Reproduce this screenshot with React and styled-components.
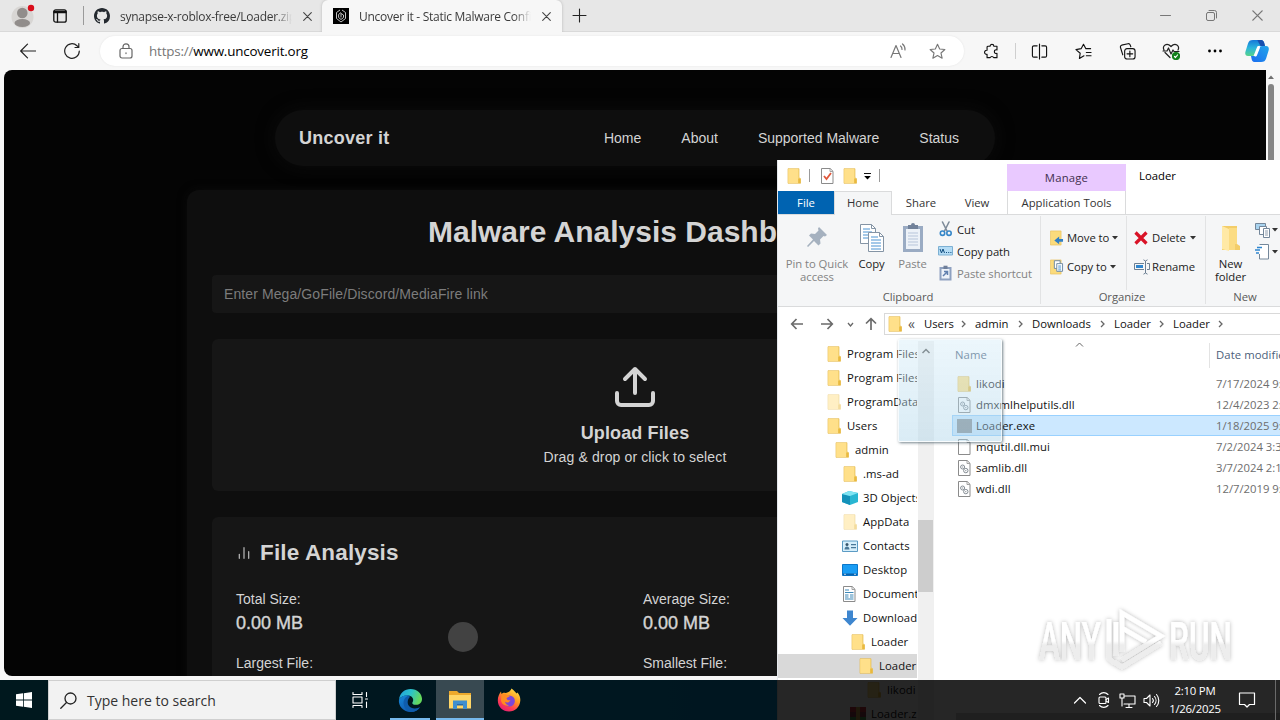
import React from 'react';

import styled, { createGlobalStyle } from 'styled-components';

const GlobalStyle = createGlobalStyle`
  * { box-sizing: border-box; }
  body {
    margin: 0;
    overflow: hidden;
    font-family: 'Open Sans', 'Noto Sans', sans-serif;
    font-size: 12px;
  }
  svg { display: block; flex: none; }
`;

const Desktop = styled.div`
  position: relative;
  width: 1280px;
  height: 720px;
  overflow: hidden;
  background: linear-gradient(90deg, #00a0c8, #0098d8 50%, #0080c0);
`;

/* ---------- browser ---------- */

const Browser = styled.div`
  position: absolute;
  top: 0;
  left: 0;
  width: 1280px;
  height: 680px;
  display: flex;
  flex-direction: column;
  background: #f7f7f7;
`;
const TabStrip = styled.div`
  display: flex;
  height: 32px;
  background: #e7e7e7;
  border-bottom: 1px solid #d9d9d9;
`;
const Profile = styled.div`
  display: flex;
  align-items: center;
  width: 84px;
  gap: 18px;
  padding-left: 11px;
  border-right: 1px solid #9a9a9a;
  margin: 6px 0;
`;
const Tab = styled.div`
  display: flex;
  align-items: center;
  width: ${p => p.width}px;
  height: 32px;
  padding-left: ${p => p.pad}px;
  background: ${p => (p.active ? '#f7f7f7' : 'transparent')};
  border-radius: 6px 6px 0 0;
  box-shadow: ${p => (p.active ? '0 0 3px #b5b5b5' : 'none')};
  clip-path: inset(0 -4px 0 -4px);
  color: #3b3b3b;
`;
const TabTitle = styled.div`
  flex: none;
  width: 172px;
  margin: 0 11px 0 10px;
  overflow: hidden;
  white-space: nowrap;
  font-size: 12px;
  letter-spacing: -0.27px;
  mask-image: linear-gradient(90deg, #000 90%, transparent);
`;
const NewTab = styled.div`
  display: flex;
  align-items: center;
  padding-left: 10px;
  flex: 1;
`;
const Caption = styled.div`
  display: flex;
  align-items: center;
  gap: 35px;
  padding-right: 17px;
`;
const Toolbar = styled.div`
  display: flex;
  align-items: center;
  height: 38px;
  padding: 0 2px 0 20px;
`;
const NavButtons = styled.div`
  display: flex;
  flex: none;
  gap: 28px;
  width: 80px;
`;
const Omnibox = styled.div`
  display: flex;
  align-items: center;
  flex: none;
  width: 864px;
  height: 30px;
  padding: 0 18px;
  border-radius: 15px;
  background: #fff;
  box-shadow: 0 0 2px #e2e2e2;
`;
const Url = styled.div`
  flex: 1;
  padding-left: 15px;
  font-size: 13.4px;
  letter-spacing: -0.18px;
  color: #000;
  span { color: #767676; }
`;
const OmniActions = styled.div`
  display: flex;
  gap: 22px;
`;
const ToolIcons = styled.div`
  display: flex;
  align-items: center;
  flex: 1;
  padding-left: 19px;
`;
const ToolSlot = styled.div`
  display: flex;
  flex: none;
  justify-content: center;
  width: ${p => p.width || 44}px;
`;
const ToolDivider = styled.div`
  flex: none;
  width: 1px;
  height: 16px;
  background: #cfcfcf;
  margin: 0 1px 0 15px;
`;
const Viewport = styled.div`
  display: flex;
  flex: 1;
  padding: 0 0 4px 4px;
`;
const Page = styled.div`
  width: 1262px;
  height: 606px;
  overflow: hidden;
  border-radius: 8px 0 0 8px;
  background: #040404;
  color: #d4d4d4;
  font-family: 'Liberation Sans', Arial, sans-serif;
  display: flex;
  flex-direction: column;
  align-items: center;
  padding-top: 40px;
`;
const PageScroll = styled.div`
  display: flex;
  flex-direction: column;
  align-items: center;
  width: 14px;
  padding: 5px 4px 0 0;
  gap: 5px;
  div { width: 6px; height: 400px; border-radius: 3px; background: #858585; }
`;
const SiteNav = styled.div`
  display: flex;
  align-items: center;
  justify-content: space-between;
  flex: none;
  width: 720px;
  height: 56px;
  padding: 0 36px 0 24px;
  border-radius: 28px;
  background: #0e0e0e;
  box-shadow: 0 0 18px #0c0c0c;
`;
const Brand = styled.div`
  font-size: 18px;
  font-weight: bold;
  letter-spacing: 0.25px;
`;
const Links = styled.div`
  display: flex;
  gap: 40px;
  font-size: 14px;
`;
const Dashboard = styled.div`
  flex: none;
  width: 896px;
  height: 700px;
  margin-top: 24px;
  padding: 24px 25px;
  border-radius: 12px;
  background: #0e0e0e;
  box-shadow: 0 0 10px #0b0b0b;
`;
const Heading = styled.h1`
  margin: 0 0 25px;
  font-size: 30px;
  line-height: 36px;
  text-align: center;
`;
const LinkInput = styled.div`
  height: 38px;
  padding: 0 12px;
  border-radius: 4px;
  background: #161616;
  color: #7c7c7c;
  font-size: 14px;
  line-height: 38px;
  letter-spacing: 0.1px;
`;
const DropZone = styled.div`
  display: flex;
  flex-direction: column;
  align-items: center;
  height: 152px;
  margin: 26px 0;
  padding-top: 24px;
  border-radius: 6px;
  background: #161616;
  font-size: 14px;
  letter-spacing: 0.13px;
  b { font-size: 18px; line-height: 24px; margin-top: 10px; }
  span { line-height: 24px; }
`;
const Analysis = styled.div`
  height: 300px;
  padding: 20px 24px;
  border-radius: 6px;
  background: #161616;
  h2 {
    display: flex;
    align-items: center;
    gap: 8px;
    margin: 0 0 18px;
    font-size: 22.5px;
    line-height: 32px;
    letter-spacing: 0.15px;
  }
`;
const Stats = styled.div`
  display: grid;
  grid-template-columns: 1fr 1fr;
  gap: 16px;
`;
const Stat = styled.div`
  font-size: 14px;
  line-height: 24px;
  b { display: block; font-size: 18px; font-weight: normal; -webkit-text-stroke: 0.4px #d4d4d4; }
`;
const ClickMark = styled.div`
  position: absolute;
  left: 448px;
  top: 622px;
  width: 30px;
  height: 30px;
  border-radius: 50%;
  background: #424242;
`;

/* ---------- file explorer ---------- */

const Explorer = styled.div`
  position: absolute;
  left: 777px;
  top: 160px;
  width: 620px;
  height: 600px;
  display: flex;
  flex-direction: column;
  background: #fff;
  border-left: 1px solid #e4e8ec;
  font-size: 11.3px;
  color: #1a1a1a;
  white-space: nowrap;
`;
const TitleBar = styled.div`
  display: flex;
  height: 31px;
`;
const QuickTools = styled.div`
  display: flex;
  align-items: center;
  width: 229px;
  padding-left: 9px;
`;
const QuickSlot = styled.div`
  width: ${p => p.width}px;
`;
const Bar = styled.div`
  width: 1px;
  height: 13px;
  background: #9a9a9a;
`;
const ManageTab = styled.div`
  width: 119px;
  height: 27px;
  margin-top: 4px;
  background: #e9c9ff;
  line-height: 28px;
  text-align: center;
  color: #41304f;
  letter-spacing: 0.2px;
`;
const WindowTitle = styled.div`
  padding-left: 13px;
  line-height: 31px;
  color: #000;
`;
const RibbonTabs = styled.div`
  display: flex;
  height: 23px;
`;
const RibbonTab = styled.div`
  width: ${p => p.width}px;
  height: ${p => (p.open ? 24 : 23)}px;
  text-align: center;
  line-height: ${p => (p.open ? 22 : 24)}px;
  color: ${p => (p.file ? '#fff' : '#333')};
  background: ${p => (p.file ? '#0063b1' : p.open ? '#f5f6f7' : 'transparent')};
  border: solid #dadbdc;
  border-width: ${p => (p.open ? '1px 1px 0' : p.tools ? '0 1px' : '0')};
  margin-right: ${p => p.space || 0}px;
  z-index: ${p => (p.open ? 1 : 0)};
`;
const Ribbon = styled.div`
  display: flex;
  flex: none;
  height: 93px;
  background: #f5f6f7;
  border: solid #dadbdc;
  border-width: 1px 0;
  letter-spacing: -0.07px;
`;
const Group = styled.div`
  display: flex;
  flex-direction: column;
  width: ${p => p.width}px;
  height: 88px;
  margin-top: 1px;
  border-right: 1px solid #e2e3e4;
`;
const GroupBody = styled.div`
  display: flex;
  height: 74px;
`;
const GroupName = styled.div`
  text-align: center;
  line-height: 14px;
  color: #5a5a5a;
  padding-right: 2px;
`;
const BigButton = styled.div`
  display: flex;
  flex-direction: column;
  align-items: center;
  width: ${p => p.width}px;
  padding-top: 6px;
  line-height: 13px;
  text-align: center;
  white-space: pre;
  color: ${p => (p.off ? '#838383' : '#222')};
  svg { margin-bottom: 3px; }
`;
const SmallButtons = styled.div`
  display: flex;
  flex-direction: column;
  padding: ${p => p.pad};
  width: ${p => p.width}px;
  border-left: ${p => (p.line ? '1px solid #e2e3e4' : '0')};
`;
const SmallButton = styled.div`
  display: flex;
  align-items: center;
  gap: ${p => (p.gap === undefined ? 4 : p.gap)}px;
  height: ${p => p.height}px;
  color: ${p => (p.off ? '#838383' : '#222')};
`;
const AddressRow = styled.div`
  display: flex;
  align-items: center;
  flex: none;
  height: 34px;
  padding-left: 12px;
`;
const HistoryButtons = styled.div`
  display: flex;
  align-items: center;
  flex: none;
  width: 94px;
  svg:nth-child(2) { margin: 0 13px 0 16px; }
  svg:nth-child(4) { margin-left: 10px; }
`;
const AddressBox = styled.div`
  display: flex;
  align-items: center;
  flex: 1;
  height: 22px;
  border: 1px solid #d9d9d9;
  padding: 0 0 1px 3px;
  color: #111;
`;
const Crumb = styled.div`
  display: flex;
  align-items: center;
  width: ${p => p.width}px;
  padding-right: 9px;
  span { flex: 1; }
`;
const Guillemet = styled.div`
  width: 21px;
  padding-left: 5px;
  font-size: 14px;
  line-height: 12px;
  color: #555;
`;
const Panes = styled.div`
  display: flex;
  flex: 1;
`;
const Tree = styled.div`
  width: 139px;
  padding-top: 1px;
  overflow: hidden;
  color: #111;
  letter-spacing: 0.08px;
`;
const TreeRow = styled.div`
  display: flex;
  align-items: center;
  height: 24px;
  padding-bottom: 2px;
  padding-left: ${p => 48 + p.level * 8}px;
  background: ${p => (p.selected ? '#d9d9d9' : 'transparent')};
`;
const TreeIcon = styled.div`
  display: flex;
  flex: none;
  width: 17px;
  margin: 2px 4px 0 0;
  padding-left: ${p => (p.wide ? 0 : 1)}px;
`;
const TreeScroll = styled.div`
  width: 16px;
  margin-left: 1px;
  background: #f0f0f0;
  padding-top: 5px;
`;
const TreeThumb = styled.div`
  width: 15px;
  height: 72px;
  margin-top: 164px;
  background: #cdcdcd;
`;
const FileList = styled.div`
  flex: 1;
  padding-left: 18px;
  letter-spacing: 0.08px;
`;
const ListHead = styled.div`
  display: flex;
  height: 32px;
  padding-top: 2px;
  line-height: 23px;
  color: #4c607a;
`;
const NameHead = styled.div`
  display: flex;
  width: 258px;
  height: 25px;
  align-items: center;
  padding: 0 0 2px 3px;
  border-right: 1px solid #e3e3e3;
  svg { margin: -20px 0 0 88px; }
`;
const DateHead = styled.div`
  padding-left: 6px;
`;
const FileRow = styled.div`
  display: flex;
  align-items: center;
  height: 21px;
  padding-left: 5px;
  background: ${p => (p.selected ? '#cce8ff' : 'transparent')};
  box-shadow: ${p => (p.selected ? 'inset 0 0 0 1px #99d1ff' : 'none')};
  color: #111;
`;
const FileName = styled.div`
  width: 240px;
  margin-left: 4px;
`;
const FileDate = styled.div`
  color: #6d6d6d;
  letter-spacing: -0.02px;
`;
const HScroll = styled.div`
  height: 17px;
  margin: 214px 0 0 4px;
  background: #cdcdcd;
`;
const DragGhost = styled.div`
  position: absolute;
  left: 898px;
  top: 339px;
  width: 104px;
  height: 103px;
  border: 1px solid rgba(255, 255, 255, 0.7);
  border-radius: 2px;
  background: linear-gradient(rgba(208, 234, 247, 0.4), rgba(172, 212, 233, 0.45));
  box-shadow: 1px 1px 3px rgba(70, 90, 100, 0.75);
`;
const Watermark = styled.div`
  position: absolute;
  left: 1030px;
  top: 602px;
`;

/* ---------- taskbar ---------- */

const Taskbar = styled.div`
  position: absolute;
  left: 0;
  top: 680px;
  width: 1280px;
  height: 40px;
  display: flex;
  align-items: center;
  background: rgba(0, 0, 0, 0.85);
  color: #fff;
`;
const TaskSlot = styled.div`
  display: flex;
  align-items: center;
  justify-content: center;
  width: ${p => p.width || 49}px;
  height: 40px;
  margin: 0 ${p => p.gap || 0}px;
  background: ${p => (p.active ? 'rgba(255, 255, 255, 0.22)' : 'transparent')};
  box-shadow: ${p => (p.running ? 'inset 0 -2px #76b9ed' : 'none')};
`;
const Search = styled.div`
  display: flex;
  align-items: center;
  width: 288px;
  height: 40px;
  padding-left: 11px;
  gap: 10px;
  background: #f2f2f2;
  border: 1px solid #cfcfcf;
  color: #333;
  font-size: 14px;
`;
const Tray = styled.div`
  display: flex;
  align-items: center;
  margin-left: auto;
  gap: 7px;
`;
const Clock = styled.div`
  width: 54px;
  margin: 0 3px 0 1px;
  font-size: 11.4px;
  line-height: 18px;
  text-align: center;
  letter-spacing: -0.25px;
  white-space: nowrap;
`;
const ShowDesktop = styled.div`
  width: 5px;
  height: 40px;
  margin-left: 6px;
  border-left: 1px solid #6a6a6a;
`;

/* ---------- icons ---------- */

const Stroke = ({ w = 18, h, box = '0 0 18 18', color = '#222', sw = 1.2, children }) => (
  <svg width={w} height={h || w} viewBox={box} fill="none" stroke={color} strokeWidth={sw} strokeLinecap="round" strokeLinejoin="round">
    {children}
  </svg>
);
const Folder = ({ pale }) => (
  <svg width="15" height="16" viewBox="0 0 15 16" opacity={pale ? 0.5 : 1}>
    <path d="M1 .7h11v9l1.5 1V15.300H1z" fill="#f8d775" stroke="#e5bb55" strokeWidth=".7" />
    <path d="M1.300 1h9.900v14H1.300z" fill="#ffe08a" />
    <path d="M11.2 10.500h2.300v4.600h-2.300z" fill="#e9b93f" />
  </svg>
);
const BigFolder = () => (
  <svg width="22" height="32" viewBox="0 0 22 32">
    <path d="M2 4h15v18l3 2v4H2z" fill="#f3cd69" />
    <path d="M2 4l7 3v22l-7-2z" fill="#ffe9a6" />
    <path d="M9 6h8v16h-2v6H9z" fill="#fbdc83" />
  </svg>
);
const Doc = ({ kind }) => (
  <svg width="15" height="16" viewBox="0 0 15 16" fill="none" stroke="#8b8b8b">
    <path d="M1.5.5h8.7l2.8 2.8v12.2H1.5z" fill="#fff" />
    <path d="M10 .7v2.8h2.8" strokeWidth=".8" />
    {kind === 'dll' && (
      <g stroke="#838b92">
        <circle cx="5.600" cy="7" r="2" />
        <circle cx="8.800" cy="10.600" r="2.200" />
        <path d="M5.600 6.500v1M8.800 10v1.200" />
      </g>
    )}
    {kind === 'text' && (
      <g stroke="#3f89b8">
        <path d="M3 4h4M3 6.500h8.500M3 9h3.500M8 9h3.500M3 11h3.500M8 11h3.500M3 13h8.500" />
      </g>
    )}
    {kind === 'check' && <path d="M4 8l2.500 3 4.500-6" stroke="#e0573b" strokeWidth="1.8" />}
  </svg>
);
const ExeIcon = () => (
  <svg width="15" height="16"><path d="M0 1h15v14H0z" fill="#8a9196" /></svg>
);
const Cube = () => (
  <svg width="16" height="16" viewBox="0 0 16 16">
    <path d="M0 4l7-3 9 2v9l-8 3-8-3z" fill="#29b6d2" />
    <path d="M0 4l8 2v9l-8-3z" fill="#1391b9" />
    <path d="M0 4l7-3 9 2-8 3z" fill="#80e4f3" />
  </svg>
);
const ContactsIcon = () => (
  <svg width="16" height="16" viewBox="0 0 16 16">
    <path d="M.5 3h15v10.500H.5z" fill="#d7effb" stroke="#5b9bc4" />
    <circle cx="5" cy="6.400" r="1.500" fill="#37566d" />
    <path d="M2.500 11.500c0-4 5-4 5 0zM9 6h5v1.200H9zm0 3h5v1.200H9z" fill="#4a7898" />
  </svg>
);
const DesktopIcon = () => (
  <svg width="16" height="16" viewBox="0 0 16 16">
    <path d="M.5 2.500h15v11H.5z" fill="#1a9df4" stroke="#0c77ca" />
    <path d="M1 11.500h14v1.800H1z" fill="#0a62ac" />
    <path d="M2 12.300h2M12 12.300h2" stroke="#fff" strokeWidth=".7" />
  </svg>
);
const DownloadIcon = () => (
  <svg width="16" height="16" viewBox="0 0 16 16"><path d="M5 .5h6V8h4.500L8 15.800.5 8H5z" fill="#3e86cf" /></svg>
);
const ZipIcon = () => (
  <svg width="16" height="16" viewBox="0 0 16 16">
    <path d="M0 1h16v5H0z" fill="#c8323f" />
    <path d="M0 6h16v5H0z" fill="#8c3a4a" />
    <path d="M0 11h16v5H0z" fill="#4a9850" />
    <path d="M6 1h4v15H6z" fill="#c9a34e" />
  </svg>
);
const Caret = () => (
  <svg width="6" height="4"><path d="M0 0h6L3 3.600z" fill="#333" /></svg>
);
const Chevron = ({ d = 'M1 1l3 3-3 3', w = 5, h = 8, sw = 1.3, color = '#666' }) => (
  <svg width={w} height={h} fill="none" stroke={color} strokeWidth={sw}><path d={d} /></svg>
);

const Avatar = () => (
  <svg width="24" height="24" viewBox="0 0 24 24">
    <circle cx="11.500" cy="13" r="11" fill="#d8d6d4" />
    <circle cx="11.300" cy="9" r="5.300" fill="#918d8b" />
    <ellipse cx="11.300" cy="19" rx="7.800" ry="4" fill="#918d8b" />
    <circle cx="20" cy="4" r="3.200" fill="#d90d1b" />
  </svg>
);
const GithubIcon = () => (
  <svg width="16" height="16" viewBox="0 0 16 16" fill="#24292f">
    <path d="M8 0C3.58 0 0 3.58 0 8c0 3.54 2.29 6.53 5.47 7.59.4.07.55-.17.55-.38 0-.19-.01-.82-.01-1.49-2.01.37-2.53-.49-2.69-.94-.09-.23-.48-.94-.82-1.13-.28-.15-.68-.52-.01-.53.63-.01 1.08.58 1.23.82.72 1.21 1.87.87 2.33.66.07-.52.28-.87.51-1.07-1.78-.2-3.64-.89-3.64-3.95 0-.87.31-1.59.82-2.15-.08-.2-.36-1.02.08-2.12 0 0 .67-.21 2.2.82.64-.18 1.32-.27 2-.27s1.36.09 2 .27c1.53-1.04 2.2-.82 2.2-.82.44 1.1.16 1.92.08 2.12.51.56.82 1.27.82 2.15 0 3.07-1.87 3.75-3.65 3.95.29.25.54.73.54 1.48 0 1.07-.01 1.93-.01 2.2 0 .21.15.46.55.38A8.01 8.01 0 0 0 16 8c0-4.42-3.58-8-8-8z" />
  </svg>
);
const UncoverIcon = () => (
  <svg width="16" height="16" viewBox="0 0 16 16" fill="none" stroke="#d8d8d8">
    <path d="M0 0h16v16H0z" fill="#000" stroke="none" />
    <path d="M7 2L3.500 4.500v6L8 14l4.500-3.500v-6L9 2M8 4.500L5.600 6.500v3L8 11.500l2.500-2V7L8 5.500v4" strokeWidth=".9" />
  </svg>
);
const CloseX = ({ size = 9, color = '#444' }) => (
  <Stroke w={size} box="0 0 9 9" color={color} sw={1.1}><path d="M.7.7l7.600 7.600M8.300.7L.7 8.300" /></Stroke>
);
const CopilotIcon = () => (
  <svg width="24" height="24" viewBox="0 0 24 24">
    <defs>
      <linearGradient id="copA" x1="0" y1="0" x2="0" y2="1">
        <stop offset="0" stopColor="#1478d8" />
        <stop offset=".5" stopColor="#2bb5dc" />
        <stop offset="1" stopColor="#57d38a" />
      </linearGradient>
      <linearGradient id="copB" x1="0" y1="1" x2="1" y2="0">
        <stop offset="0" stopColor="#1a6cf0" />
        <stop offset="1" stopColor="#22a6ea" />
      </linearGradient>
    </defs>
    <path d="M8 1h8c2 0 3 2 3.500 4l.5 2h-5c-2 0-2.700 1-3.200 3l-1.300 4c-.6 2-1.500 3-3.500 3H3c-2.500 0-3.300-2-2.500-4.500l2.500-8C3.800 2 5 1 8 1z" fill="url(#copA)" />
    <path d="M16 23H9.500c-2 0-2.500-1.500-3-3.500L6 17h3c2 0 2.800-1.200 3.300-3l1.400-4c.6-2 1.600-3 3.500-3H21c2.500 0 3.300 2 2.600 4.500l-2.500 8c-.8 2.500-2.100 3.500-5.100 3.500z" fill="url(#copB)" />
    <path d="M12.300 1H16c2 0 3 2 3.500 4l.5 2h-4.500z" fill="#174fae" />
    <path d="M13.500 8.500L10.500 16" stroke="#fff" strokeWidth="3" strokeLinecap="round" />
  </svg>
);
const EdgeIcon = () => (
  <svg width="25" height="25" viewBox="0 0 26 26">
    <defs>
      <linearGradient id="edgeA" x1="0" y1="0" x2="1" y2=".3">
        <stop offset="0" stopColor="#219fe0" />
        <stop offset=".55" stopColor="#2cc3c9" />
        <stop offset="1" stopColor="#65d95c" />
      </linearGradient>
      <linearGradient id="edgeB" x1="0" y1="0" x2=".6" y2="1">
        <stop offset="0" stopColor="#1688d8" />
        <stop offset="1" stopColor="#1057ad" />
      </linearGradient>
    </defs>
    <path d="M1 12C2 5 7 1 13 1c7 0 12 5 12 10.500 0 4-3 6-6 6-3.500 0-4.500-1.500-4-2.500 1.800-2.500.6-6-3-7C8 7 3 8.500 1 12z" fill="url(#edgeA)" />
    <path d="M1 12c2.500-4 8-5.500 11-4-3 1-4.500 4-3.800 7.500C9 20 13 22.500 17 22c2-.2 4-1 5.800-2C20.500 23.500 17 25 13 25 6 25 0 19 1 12z" fill="url(#edgeB)" />
    <path d="M12 8c-4.500.5-7 4.500-6 9.500C7 22 10 24.700 13.500 25c4 0 7.200-2 9.300-5-4 2-9 2-11.500-1.500-2-3-1.300-7 .9-9z" fill="#0f5cab" />
  </svg>
);
const FilesIcon = () => (
  <svg width="22" height="20" viewBox="0 0 22 20">
    <path d="M0 1h8l2 2h12v15H0z" fill="#eda92c" />
    <path d="M0 5h22v13.500H0z" fill="#ffd667" />
    <path d="M4 10.500h14V19h-4v-4H8v4H4z" fill="#3f8fcf" />
    <path d="M8 14h6v1.500H8z" fill="#2768a8" />
  </svg>
);
const FirefoxIcon = () => (
  <svg width="24" height="24" viewBox="0 0 24 24">
    <defs>
      <linearGradient id="fox" x1=".8" y1="0" x2=".2" y2="1">
        <stop offset="0" stopColor="#ffe14a" />
        <stop offset=".4" stopColor="#ff9a1f" />
        <stop offset=".7" stopColor="#ff3f51" />
        <stop offset="1" stopColor="#e01a78" />
      </linearGradient>
    </defs>
    <path d="M14.500.5c3 2 3.500 3.500 5 5l1-1c2 2.500 3 5 2.800 8C23 19 18 23.500 12 23.500S.8 19 .8 12.500C.8 9 2 6 4 3.500l.5 2.500C6 4.500 7 4.500 8.500 5c2.500-.5 5-1.500 6-4.500z" fill="url(#fox)" />
    <circle cx="12.300" cy="13" r="5.600" fill="#7c46d8" />
    <path d="M4.500 6.500c2-1 4-.5 5.500.5l3 1c-1 1.500-3 1.200-3.500 2.500.5 1.800 2.500 2 4 1.500-1 2.500-4 3-5.500 1.800 0 0 .5 3 4 3.700-4 1-7.500-1.500-8-5z" fill="#ff8c22" />
  </svg>
);

const RibbonPin = () => (
  <svg width="26" height="32" viewBox="0 0 26 32">
    <path d="M15 5l8 8-2 1.500-1.500-.5-3.500 3.500.5 4-2 2-4.500-4.500L4 25l-1-1 6-6.500-4-4 2-2 4 .5 3.500-3.500-.5-2z" fill="#a5b1bf" />
  </svg>
);
const CopyIcon = () => (
  <svg width="26" height="32" viewBox="0 0 26 32" fill="#fff" stroke="#8494a5">
    <path d="M1.500 2.500h11l4 4v15h-15z" />
    <path d="M4 7h7M4 10h9M4 13h9M4 16h9" stroke="#4a93d2" />
    <path d="M9.500 10.500h11l4 4v15h-15z" />
    <path d="M12 15h7M12 18h10M12 21h10M12 24h10M12 27h10" stroke="#4a93d2" />
    <path d="M12.500 2.500v4h4M20.500 10.500v4h4" fill="none" />
  </svg>
);
const PasteIcon = () => (
  <svg width="22" height="32" viewBox="0 0 22 32">
    <path d="M1 4h20v26H1z" fill="#9aabc3" />
    <path d="M4 7h14v20H4z" fill="#edf2f8" />
    <path d="M6 11h10M6 14h10M6 17h10M6 20h10M6 23h10" stroke="#b7c5da" />
    <path d="M6 3h3a2 2 0 0 1 4 0h3v4H6z" fill="#72829a" />
  </svg>
);
const CutIcon = () => (
  <Stroke w={15} h={16} box="0 0 14 16" color="#7e8c99" sw={1.6}>
    <path d="M4 1l4.500 9M10.500 1L6 10" />
    <g stroke="#3586c8"><circle cx="4" cy="12.200" r="2.200" /><circle cx="10.500" cy="12.200" r="2.200" /></g>
  </Stroke>
);
const CopyPathIcon = () => (
  <svg width="15" height="14" viewBox="0 0 15 14">
    <path d="M.5 2.500h14v8.500H.5z" fill="#b4dcf5" stroke="#7cb0d3" />
    <path d="M2 5l1.500 4L5 5l1.500 4M8 8.500h1M10.200 8.500h1M12.400 8.500h1" stroke="#124e80" fill="none" />
  </svg>
);
const ShortcutIcon = () => (
  <svg width="15" height="16" viewBox="0 0 14 16">
    <path d="M1 2h12v13.500H1z" fill="#8ea1c0" />
    <path d="M3 4h8v9.500H3z" fill="#edf2f9" />
    <path d="M5 .7h4V4H5z" fill="#6f7f99" />
    <path d="M4.500 11l4-4M5.500 6.500h3.500V10" stroke="#5f7fae" strokeWidth="1.500" fill="none" />
  </svg>
);
const MoveIcon = ({ copy }) => (
  <svg width="14" height="16" viewBox="0.500 0 14.500 16">
    <path d="M1 .7h11v14.600H1z" fill="#fbdb7c" stroke="#e5bb55" strokeWidth=".6" />
    {copy ? (
      <g fill="#fff" stroke="#708ba4">
        <path d="M5 1.500h6v8H5z" /><path d="M7.500 4.500h6v8h-6z" />
        <path d="M9 7h3M9 9h3M9 11h3" stroke="#4a93d2" />
      </g>
    ) : <path d="M14 9H10V6.500L5 10.500l5 4V12h4z" fill="#317fc4" />}
  </svg>
);
const DeleteIcon = () => (
  <svg width="14" height="14" viewBox="0 0 14 14"><path d="M1.500 1.500l11 11M12.500 1.500l-11 11" stroke="#d91327" strokeWidth="3.200" /></svg>
);
const RenameIcon = () => (
  <svg width="16" height="16" viewBox="0 0 16 16" fill="none" stroke="#6c7f92">
    <path d="M10 4.500H.5v6H10M13 4.500h2.500v6H13" />
    <path d="M2 6h7v3H2z" fill="#2f86cf" stroke="none" />
    <path d="M11.500 2v12M9.500.8l2 1.200 2-1.200M9.500 15.200l2-1.200 2 1.200" />
  </svg>
);
const NewItemIcon = () => (
  <svg width="16" height="16" viewBox="0 0 16 16" fill="#fff" stroke="#74879a">
    <path d="M.5 1.500h10v6H.5z" fill="#a8d3ef" /><path d="M4.500 4.500h7v8h-7z" /><path d="M8.500 6.500h6v9h-6z" />
    <path d="M10 9h3M10 11h3M10 13h3" strokeWidth=".8" />
  </svg>
);
const EasyIcon = () => (
  <svg width="16" height="16" viewBox="0 0 16 16" fill="none" stroke="#74879a">
    <path d="M4.500.5h9v14.500h-9" fill="#fff" /><path d="M4.500 10v5" />
    <path d="M0 6h5M2 3.500h5M1 9h3" stroke="#2f86cf" strokeWidth="1.300" />
  </svg>
);
const Arrow = ({ d, color = '#6b6b6b' }) => (
  <svg width="14" height="14" viewBox="0 0 14 14" fill="none" stroke={color} strokeWidth="1.700"><path d={d} /></svg>
);

const AnyRunMark = () => (
  <svg width="212" height="78" viewBox="0 0 212 78">
    <defs>
      <filter id="markShadow" x="-10%" y="-10%" width="120%" height="120%">
        <feDropShadow dx="0" dy="0" stdDeviation="2" floodColor="#000" floodOpacity=".3" />
      </filter>
      <linearGradient id="markFill" x1="0" y1="0" x2="0" y2="78" gradientUnits="userSpaceOnUse">
        <stop offset=".5" stopColor="#fff" />
        <stop offset=".55" stopColor="#ededed" />
      </linearGradient>
    </defs>
    <g filter="url(#markShadow)" fill="url(#markFill)" fontFamily="Roboto, sans-serif" fontSize="53" fontWeight="500">
      <text x="9" y="58" textLength="62" lengthAdjust="spacingAndGlyphs">ANY</text>
      <text x="139" y="58" textLength="63" lengthAdjust="spacingAndGlyphs">RUN</text>
      <g fill="none" stroke="url(#markFill)" strokeWidth="4.500">
        <path d="M86 54V20M79 17v39l5 5" />
        <path d="M92 50V11l39 23-39 24M131 41L92 65l-8-5" />
        <path d="M92 26l24 14" />
      </g>
    </g>
  </svg>
);

/* ---------- content ---------- */

const tree = [
  { name: 'Program Files', level: 0 },
  { name: 'Program Files (x86)', level: 0 },
  { name: 'ProgramData', level: 0, pale: true },
  { name: 'Users', level: 0 },
  { name: 'admin', level: 1 },
  { name: '.ms-ad', level: 2 },
  { name: '3D Objects', level: 2, icon: <Cube /> },
  { name: 'AppData', level: 2, pale: true },
  { name: 'Contacts', level: 2, icon: <ContactsIcon /> },
  { name: 'Desktop', level: 2, icon: <DesktopIcon /> },
  { name: 'Documents', level: 2, icon: <Doc kind="text" /> },
  { name: 'Downloads', level: 2, icon: <DownloadIcon /> },
  { name: 'Loader', level: 3 },
  { name: 'Loader', level: 4, selected: true },
  { name: 'likodi', level: 5 },
  { name: 'Loader.zip', level: 3, icon: <ZipIcon /> },
];
const files = [
  { name: 'likodi', date: '7/17/2024 9:32 PM', icon: <Folder /> },
  { name: 'dmxmlhelputils.dll', date: '12/4/2023 2:51 AM', icon: <Doc kind="dll" /> },
  { name: 'Loader.exe', date: '1/18/2025 9:10 PM', icon: <ExeIcon />, selected: true },
  { name: 'mqutil.dll.mui', date: '7/2/2024 3:31 AM', icon: <Doc /> },
  { name: 'samlib.dll', date: '3/7/2024 2:11 AM', icon: <Doc kind="dll" /> },
  { name: 'wdi.dll', date: '12/7/2019 9:08 AM', icon: <Doc kind="dll" /> },
];
const crumbs = [['Users', 51], ['admin', 57], ['Downloads', 82], ['Loader', 59], ['Loader', 59]];

const BrowserWindow = () => (
  <Browser>
    <TabStrip>
      <Profile>
        <Avatar />
        <Stroke w={14} box="0 0 14 14" color="#111" sw={1.3}>
          <rect x=".8" y=".8" width="12.400" height="12.400" rx="2" />
          <path d="M1 2.500h12M1 3.500h12M4.500 3v10" />
        </Stroke>
      </Profile>
      <Tab width={238} pad={10}>
        <GithubIcon />
        <TabTitle>synapse-x-roblox-free/Loader.zip at</TabTitle>
        <CloseX />
      </Tab>
      <Tab width={240} pad={11} active>
        <UncoverIcon />
        <TabTitle>Uncover it - Static Malware Config</TabTitle>
        <CloseX />
      </Tab>
      <NewTab><Stroke w={15} box="0 0 15 15" sw={1.1}><path d="M7.500 1v13M1 7.500h13" /></Stroke></NewTab>
      <Caption>
        <Stroke w={11} box="0 0 11 11" color="#777" sw={1}><path d="M.5 5.500h10" /></Stroke>
        <Stroke w={11} box="0 0 11 11" color="#777" sw={1}>
          <rect x=".5" y="2.500" width="8" height="8" rx="1.500" />
          <path d="M3 .5h5.500a2 2 0 0 1 2 2V8" />
        </Stroke>
        <CloseX size={11} color="#777" />
      </Caption>
    </TabStrip>
    <Toolbar>
      <NavButtons>
        <Stroke w={16} box="0 0 16 16"><path d="M15.500 8H.7M7.500 1.200L.7 8l6.800 6.800" /></Stroke>
        <Stroke w={16} box="0 0 16 16"><path d="M15.300 8A7.300 7.300 0 1 1 13 2.700L14.500 4M14.800.7v3.800H11" /></Stroke>
      </NavButtons>
      <Omnibox>
        <Stroke w={16} color="#666" box="0 0 16 16">
          <rect x="2" y="5.500" width="12" height="9.500" rx="2" />
          <path d="M5 5.500V3.800a3 3 0 0 1 6 0v1.700M8 9.800v.8" />
        </Stroke>
        <Url><span>https://</span>www.uncoverit.org</Url>
        <OmniActions>
          <Stroke w={17} h={16} box="0 0 17 16" color="#777">
            <path d="M1 14.500L6 2.500l5 12M2.800 10.500h6.400M10.500 3a4 4 0 0 1 1.500 3.500M12.500 1a7 7 0 0 1 2.500 6" />
          </Stroke>
          <Stroke w={17} box="0 0 18 18" color="#777"><path d="M9 1.300l2.300 5 5.500.6-4.100 3.700 1.200 5.500L9 13.300l-4.900 2.800 1.200-5.500L1.200 6.900l5.500-.6z" /></Stroke>
        </OmniActions>
      </Omnibox>
      <ToolIcons>
        <ToolSlot width={17}>
          <Stroke w={17} color="#111"><path d="M5.500 3.500h2a2 2 0 0 1 4 0h3.300v3.800a2 2 0 1 0 0 3.700v4.500h-3.500a2 2 0 0 0-3.700 0H4.300V12a2.200 2.200 0 1 1 0-4.300V4.500a1 1 0 0 1 1.200-1z" /></Stroke>
        </ToolSlot>
        <ToolDivider />
        <ToolSlot>
          <Stroke w={17} color="#111"><path d="M6.500 3H3a1.500 1.500 0 0 0-1.500 1.500v9A1.500 1.500 0 0 0 3 15h3.500M11.500 3H15a1.500 1.500 0 0 1 1.500 1.500v9A1.500 1.500 0 0 1 15 15h-3.500M9 1v16" /></Stroke>
        </ToolSlot>
        <ToolSlot>
          <Stroke w={17} color="#111"><path d="M9.500 13.500l-4.800 2.800.8-5.500L1 7l5.500-1L9 1.300 11.500 6h5M12 10h5M12 13.500h5" /></Stroke>
        </ToolSlot>
        <ToolSlot>
          <Stroke w={17} color="#111">
            <rect x="6" y="6" width="11" height="11" rx="2.500" />
            <path d="M11.500 8.500v6M8.500 11.500h6M4 12.500L1.500 4.500a2 2 0 0 1 1.300-2.200l6.700-1.500a2 2 0 0 1 2.300 1.200l.7 2" />
          </Stroke>
        </ToolSlot>
        <ToolSlot>
          <Stroke w={18} color="#222">
            <path d="M2 8C0 4 4.500 0 9 4.500 13.500 0 18 4 16 8M3 10.500l5 5M1 9h4l1.500-3 2.500 6L11 8l1 1.500h5" />
            <circle cx="14" cy="14" r="3.500" fill="#13801c" stroke="#13801c" />
            <path d="M12.500 14.500l1 1 2-2.500" stroke="#fff" />
          </Stroke>
        </ToolSlot>
        <ToolSlot>
          <svg width="16" height="4"><circle cx="2.500" cy="2" r="1.400" /><circle cx="8" cy="2" r="1.400" /><circle cx="13.500" cy="2" r="1.400" /></svg>
        </ToolSlot>
        <ToolSlot width={40}><CopilotIcon /></ToolSlot>
      </ToolIcons>
    </Toolbar>
    <Viewport>
      <Page>
        <SiteNav>
          <Brand>Uncover it</Brand>
          <Links>
            <span>Home</span>
            <span>About</span>
            <span>Supported Malware</span>
            <span>Status</span>
          </Links>
        </SiteNav>
        <Dashboard>
          <Heading>Malware Analysis Dashboard</Heading>
          <LinkInput>Enter Mega/GoFile/Discord/MediaFire link</LinkInput>
          <DropZone>
            <Stroke w={48} box="0 0 24 24" color="#d4d4d4" sw={2}>
              <path d="M21 15v4a2 2 0 0 1-2 2H5a2 2 0 0 1-2-2v-4M17 8l-5-5-5 5M12 3v12" />
            </Stroke>
            <b>Upload Files</b>
            <span>Drag &amp; drop or click to select</span>
          </DropZone>
          <Analysis>
            <h2>
              <Stroke w={16} box="0 0 24 24" color="#ababab" sw={2}><path d="M12 20V4M19 20V10M5 20v-6" /></Stroke>
              File Analysis
            </h2>
            <Stats>
              <Stat>Total Size:<b>0.00 MB</b></Stat>
              <Stat>Average Size:<b>0.00 MB</b></Stat>
              <Stat>Largest File:<b>0.00 MB</b></Stat>
              <Stat>Smallest File:<b>0.00 MB</b></Stat>
            </Stats>
          </Analysis>
        </Dashboard>
      </Page>
      <PageScroll>
        <svg width="6" height="4"><path d="M0 4h6L3 .4z" fill="#707070" /></svg>
        <div />
      </PageScroll>
    </Viewport>
  </Browser>
);

const ExplorerWindow = () => (
  <Explorer>
    <TitleBar>
      <QuickTools>
        <QuickSlot width={22}><Folder /></QuickSlot>
        <Bar />
        <QuickSlot width={33}><svg width="26" height="16" viewBox="-10 0 26 16"><Doc kind="check" /></svg></QuickSlot>
        <QuickSlot width={20}><Folder /></QuickSlot>
        <QuickSlot width={16}>
          <svg width="9" height="8"><path d="M1 1.500h7" stroke="#111" /><path d="M1.200 4h6.600L4.500 7.500z" /></svg>
        </QuickSlot>
        <Bar />
      </QuickTools>
      <ManageTab>Manage</ManageTab>
      <WindowTitle>Loader</WindowTitle>
    </TitleBar>
    <RibbonTabs>
      <RibbonTab width={56} file>File</RibbonTab>
      <RibbonTab width={58} open>Home</RibbonTab>
      <RibbonTab width={58}>Share</RibbonTab>
      <RibbonTab width={54} space={3}>View</RibbonTab>
      <RibbonTab width={119} tools>Application Tools</RibbonTab>
    </RibbonTabs>
    <Ribbon>
      <Group width={263}>
        <GroupBody>
          <BigButton width={78} off><RibbonPin />{'Pin to Quick\naccess'}</BigButton>
          <BigButton width={31}><CopyIcon />Copy</BigButton>
          <BigButton width={51} off><PasteIcon />Paste</BigButton>
          <SmallButtons pad="2px 0 0 0" width={102}>
            <SmallButton height={22}><CutIcon />Cut</SmallButton>
            <SmallButton height={22}><CopyPathIcon />Copy path</SmallButton>
            <SmallButton height={22} off><ShortcutIcon />Paste shortcut</SmallButton>
          </SmallButtons>
        </GroupBody>
        <GroupName>Clipboard</GroupName>
      </Group>
      <Group width={165}>
        <GroupBody>
          <SmallButtons pad="7px 0 0 9px" width={85}>
            <SmallButton height={29} gap={3}><MoveIcon />Move to<Caret /></SmallButton>
            <SmallButton height={29} gap={3}><MoveIcon copy />Copy to<Caret /></SmallButton>
          </SmallButtons>
          <SmallButtons pad="7px 0 0 7px" width={79} line>
            <SmallButton height={29}><DeleteIcon />Delete<Caret /></SmallButton>
            <SmallButton height={29} gap={2}><RenameIcon />Rename</SmallButton>
          </SmallButtons>
        </GroupBody>
        <GroupName>Organize</GroupName>
      </Group>
      <Group width={81}>
        <GroupBody>
          <BigButton width={49}><BigFolder />{'New\nfolder'}</BigButton>
          <SmallButtons pad="3px 0 0 0" width={30}>
            <SmallButton height={22} gap={1}><NewItemIcon /><Caret /></SmallButton>
            <SmallButton height={22} gap={1}><EasyIcon /><Caret /></SmallButton>
          </SmallButtons>
        </GroupBody>
        <GroupName>New</GroupName>
      </Group>
    </Ribbon>
    <AddressRow>
      <HistoryButtons>
        <Arrow d="M13 7H2M6.500 2L1.700 7l4.800 5" />
        <Arrow d="M1 7h11M7.500 2l4.800 5-4.800 5" />
        <Chevron d="M1 1l2.500 3L6 1" w={7} h={5} />
        <Arrow d="M7 13V2M2 6.500l5-4.800 5 4.800" />
      </HistoryButtons>
      <AddressBox>
        <Folder />
        <Guillemet>«</Guillemet>
        {crumbs.map(([name, width], i) => (
          <Crumb key={i} width={width}><span>{name}</span><Chevron /></Crumb>
        ))}
      </AddressBox>
    </AddressRow>
    <Panes>
      <Tree>
        {tree.map((node, i) => (
          <TreeRow key={i} level={node.level} selected={node.selected}>
            <TreeIcon wide={!!node.icon}>{node.icon || <Folder pale={node.pale} />}</TreeIcon>
            {node.name}
          </TreeRow>
        ))}
      </Tree>
      <TreeScroll>
        <svg width="15" height="10" fill="none" stroke="#555" strokeWidth="1.500"><path d="M4.500 7L8 3.500 11.500 7" /></svg>
        <TreeThumb />
      </TreeScroll>
      <FileList>
        <ListHead>
          <NameHead>Name<Chevron d="M1 4.500L4.500 1 8 4.500" w={9} h={6} sw={1} /></NameHead>
          <DateHead>Date modified</DateHead>
        </ListHead>
        {files.map(f => (
          <FileRow key={f.name} selected={f.selected}>
            {f.icon}
            <FileName>{f.name}</FileName>
            <FileDate>{f.date}</FileDate>
          </FileRow>
        ))}
        <HScroll />
      </FileList>
    </Panes>
  </Explorer>
);

export default function App() {
  return (
    <Desktop>
      <GlobalStyle />
      <BrowserWindow />
      <ClickMark />
      <ExplorerWindow />
      <DragGhost />
      <Watermark><AnyRunMark /></Watermark>
      <Taskbar>
        <TaskSlot width={48}>
          <svg width="16" height="16" viewBox="0 0 16 16" fill="#fff"><path d="M0 2.300l7-1v6.200H0zM7.800 1.200L16 0v7.500H7.800zM0 8.400h7v6.300l-7-1zM7.800 8.400H16V16l-8.200-1.200z" /></svg>
        </TaskSlot>
        <Search>
          <Stroke w={17} box="0 0 17 17" sw={1.300}><circle cx="10.500" cy="6.500" r="5.500" /><path d="M6.500 10.500L.8 16.200" /></Stroke>
          Type here to search
        </Search>
        <TaskSlot width={48}>
          <Stroke w={16} box="0 0 16 16" color="#fff" sw={1.100}><path d="M1 .5v2h9v-2M1 15.500v-2h9v2M1 5h9v6H1zM14.500.5v4M14.500 10v5.500M13.500 7h2" /></Stroke>
        </TaskSlot>
        <TaskSlot width={40} gap={6} running><EdgeIcon /></TaskSlot>
        <TaskSlot width={48} active running><FilesIcon /></TaskSlot>
        <TaskSlot><FirefoxIcon /></TaskSlot>
        <Tray>
          <Stroke w={16} h={16} box="0 0 16 16" color="#fff"><path d="M1.500 11L7 5.500l5.500 5.500" /></Stroke>
          <Stroke w={16} box="0 0 16 16" color="#fff" sw={1.100}>
            <path d="M3.500 2.500C6 0 9.500 0 12 2.500M3.500 13.500c2.500 2.500 6 2.500 8.500 0M10 7.500L12.500 6v4.500L10 9" />
            <rect x="3" y="5" width="7" height="6.500" rx="1" />
          </Stroke>
          <Stroke w={17} box="0 0 17 17" color="#fff" sw={1.100}><path d="M6 4h10v8H5M1 2h4v4H1zM3 6v8M10 12v3M7 15.500h6" /></Stroke>
          <Stroke w={17} box="0 0 17 17" color="#fff" sw={1.100}><path d="M1 6.500h2.500L7 3v11l-3.500-3.500H1zM9.500 6.500a3 3 0 0 1 0 4M11.500 4.500a6 6 0 0 1 0 8M13.500 2.500a9 9 0 0 1 0 12" /></Stroke>
          <Clock>2:10 PM<br />1/26/2025</Clock>
          <Stroke w={30} h={16} box="-7 0 30 16" color="#fff"><path d="M.5 1h15v11.500h-5L8 15l-2.500-2.500h-5z" /></Stroke>
          <ShowDesktop />
        </Tray>
      </Taskbar>
    </Desktop>
  );
}
